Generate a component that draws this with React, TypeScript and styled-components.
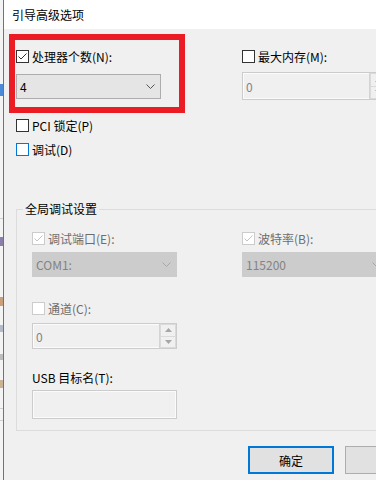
import React, { FunctionComponent } from 'react';
import styled, { createGlobalStyle, css } from 'styled-components';

const GlobalStyle = createGlobalStyle`
    html,
    body {
        margin: 0;
        padding: 0;
        background: #f0f0f0;
    }

    body {
        font-family: 'Noto Sans CJK SC', 'Microsoft YaHei', sans-serif;
        font-size: 12px;
        color: #000;
    }
`;

const Screen = styled.div`
    width: 376px;
    height: 480px;
    overflow: hidden;
    display: flex;
`;

// a sliver of the window that sits behind the dialog
const BehindStrip = styled.div`
    flex: 0 0 3px;
    display: flex;
    flex-direction: column;
    background: #f4f4f4;
`;

const StripMark = styled.div<{ $mt: number; $h: number; $color: string }>`
    margin-top: ${p => p.$mt}px;
    height: ${p => p.$h}px;
    background: ${p => p.$color};
`;

const Dialog = styled.div`
    flex: 0 0 470px;
    display: flex;
    flex-direction: column;
    border-left: 1px solid #3c7fc8;
    background: #f0f0f0;
`;

const TitleBar = styled.div`
    height: 29px;
    box-sizing: border-box;
    padding: 1px 0 0 8px;
    display: flex;
    align-items: center;
    background: #fff;
    line-height: 16px;
`;

const Body = styled.div`
    position: relative;
    padding: 21px 0 0 12px;
`;

const Highlight = styled.div`
    position: absolute;
    left: 5px;
    top: 5px;
    width: 176px;
    height: 79px;
    box-sizing: border-box;
    border: 6px solid #ec1c24;
    pointer-events: none;
`;

const Columns = styled.div<{ $first: number }>`
    display: grid;
    grid-template-columns: ${p => p.$first}px 145px;
    align-items: start;
`;

const Column = styled.div`
    display: flex;
    flex-direction: column;
    align-items: flex-start;
`;

type BoxState = 'normal' | 'hover' | 'disabled';

const CheckRow = styled.label<{ $mt?: number; $disabled?: boolean }>`
    margin-top: ${p => p.$mt || 0}px;
    height: 13px;
    display: flex;
    align-items: center;
    gap: 3px;
    line-height: 13px;
    white-space: nowrap;
    color: ${p => (p.$disabled ? '#6d6d6d' : '#000')};
`;

const Box = styled.span<{ $state: BoxState }>`
    width: 13px;
    height: 13px;
    box-sizing: border-box;
    display: flex;
    align-items: center;
    justify-content: center;
    background: #fff;
    border: 1px solid
        ${p => (p.$state === 'hover' ? '#0078d7' : p.$state === 'disabled' ? '#cccccc' : '#333333')};
`;

const Label = styled.div<{ $mt?: number }>`
    margin-top: ${p => p.$mt || 0}px;
    height: 13px;
    line-height: 13px;
    white-space: nowrap;
`;

const SelectBox = styled.div<{ $mt?: number; $disabled?: boolean }>`
    margin-top: ${p => p.$mt || 0}px;
    width: 145px;
    height: 25px;
    box-sizing: border-box;
    padding: 0 5px 0 3px;
    display: flex;
    align-items: center;
    justify-content: space-between;
    ${p =>
        p.$disabled
            ? css`
                  background: #cccccc;
                  border: 1px solid #cccccc;
                  color: #838383;
              `
            : css`
                  background: #e5e5e5;
                  border: 1px solid #adadad;
                  color: #000;
              `}
`;

const FieldBox = styled.div<{ $mt?: number; $h: number }>`
    margin-top: ${p => p.$mt || 0}px;
    width: 145px;
    height: ${p => p.$h}px;
    box-sizing: border-box;
    display: flex;
    border: 1px solid #cccccc;
    box-shadow: inset 0 0 0 1px #fbfbfb;
    background: #f0f0f0;
`;

const FieldValue = styled.div`
    flex: 1;
    display: flex;
    align-items: center;
    padding-left: 3px;
    color: #838383;
`;

const SpinColumn = styled.div`
    flex: 0 0 16px;
    display: flex;
    flex-direction: column;
    border-left: 1px solid #d4d4d4;
`;

const SpinHalf = styled.div`
    flex: 1;
    display: flex;
    align-items: center;
    justify-content: center;
    border: 1px solid #dadada;
    background: #f0f0f0;

    & + & {
        border-top: none;
    }
`;

const GroupBox = styled.div`
    position: relative;
    margin-top: 53px;
    width: 440px;
    box-sizing: border-box;
    padding: 22px 0 11px 15px;
    border: 1px solid #dcdcdc;
`;

const GroupTitle = styled.span`
    position: absolute;
    left: 6px;
    top: -9px;
    padding: 0 2px;
    line-height: 16px;
    background: #f0f0f0;
`;

const ButtonRow = styled.div`
    margin: 15px 0 0 232px;
    display: flex;
    gap: 11px;
`;

const DialogButton = styled.button<{ $default?: boolean }>`
    flex: 0 0 86px;
    height: 28px;
    box-sizing: border-box;
    padding: 0;
    font: inherit;
    color: #000;
    background: #e1e1e1;
    border: ${p => (p.$default ? '2px solid #0078d7' : '1px solid #adadad')};
`;

const CheckMark: FunctionComponent<{ color: string }> = ({ color }) => (
    <svg width="11" height="11" viewBox="0 0 11 11">
        <polyline points="1.5,5.5 4,8 9.5,2.5" fill="none" stroke={color} strokeWidth="1" />
    </svg>
);

const Chevron: FunctionComponent<{ color: string }> = ({ color }) => (
    <svg width="9" height="5" viewBox="0 0 9 5">
        <polyline points="0.5,0.5 4.5,4.5 8.5,0.5" fill="none" stroke={color} strokeWidth="1" />
    </svg>
);

const Arrow: FunctionComponent<{ up?: boolean }> = ({ up }) => (
    <svg width="7" height="4" viewBox="0 0 7 4">
        <polygon points={up ? '0,4 7,4 3.5,0' : '0,0 7,0 3.5,4'} fill="#a6a6a6" />
    </svg>
);

interface CheckProps {
    label: string;
    checked?: boolean;
    state?: BoxState;
    mt?: number;
}

const Check: FunctionComponent<CheckProps> = ({ label, checked, state = 'normal', mt }) => (
    <CheckRow $mt={mt} $disabled={state === 'disabled'}>
        <Box $state={state}>
            {checked && <CheckMark color={state === 'disabled' ? '#c4c4c4' : '#333'} />}
        </Box>
        {label}
    </CheckRow>
);

const Select: FunctionComponent<{ value: string; disabled?: boolean; mt?: number }> = ({
    value,
    disabled,
    mt,
}) => (
    <SelectBox $mt={mt} $disabled={disabled}>
        <span>{value}</span>
        <Chevron color={disabled ? '#a8a8a8' : '#555'} />
    </SelectBox>
);

const SpinField: FunctionComponent<{ value: string; height: number; mt?: number }> = ({
    value,
    height,
    mt,
}) => (
    <FieldBox $mt={mt} $h={height}>
        <FieldValue>{value}</FieldValue>
        <SpinColumn>
            <SpinHalf>
                <Arrow up />
            </SpinHalf>
            <SpinHalf>
                <Arrow />
            </SpinHalf>
        </SpinColumn>
    </FieldBox>
);

const App: FunctionComponent = () => (
    <Screen>
        <GlobalStyle />
        <BehindStrip>
            <StripMark $mt={84} $h={12} $color="#4a8ad8" />
            <StripMark $mt={122} $h={1} $color="#d0d0d0" />
            <StripMark $mt={18} $h={9} $color="#8a7fa8" />
            <StripMark $mt={51} $h={9} $color="#c9a07a" />
            <StripMark $mt={19} $h={7} $color="#b3bcc8" />
            <StripMark $mt={22} $h={6} $color="#bdbdbd" />
            <StripMark $mt={20} $h={8} $color="#c8b394" />
            <StripMark $mt={20} $h={1} $color="#d0d0d0" />
            <StripMark $mt={11} $h={1} $color="#d0d0d0" />
        </BehindStrip>
        <Dialog>
            <TitleBar>引导高级选项</TitleBar>
            <Body>
                <Columns $first={226}>
                    <Column>
                        <Check label="处理器个数(N):" checked />
                        <Select value="4" mt={11} />
                        <Check label="PCI 锁定(P)" mt={20} />
                        <Check label="调试(D)" state="hover" mt={11} />
                    </Column>
                    <Column>
                        <Check label="最大内存(M):" />
                        <SpinField value="0" height={28} mt={9} />
                    </Column>
                </Columns>

                <GroupBox>
                    <GroupTitle>全局调试设置</GroupTitle>
                    <Columns $first={210}>
                        <Column>
                            <Check label="调试端口(E):" checked state="disabled" />
                            <Select value="COM1:" disabled mt={7} />
                            <Check label="通道(C):" state="disabled" mt={25} />
                            <SpinField value="0" height={26} mt={8} />
                            <Label $mt={22}>USB 目标名(T):</Label>
                            <FieldBox $mt={6} $h={29} />
                        </Column>
                        <Column>
                            <Check label="波特率(B):" checked state="disabled" />
                            <Select value="115200" disabled mt={7} />
                        </Column>
                    </Columns>
                </GroupBox>

                <ButtonRow>
                    <DialogButton $default>确定</DialogButton>
                    {/* the cancel button runs off the edge; its caption is out of view */}
                    <DialogButton aria-label="取消" />
                </ButtonRow>

                <Highlight />
            </Body>
        </Dialog>
    </Screen>
);

export default App;
